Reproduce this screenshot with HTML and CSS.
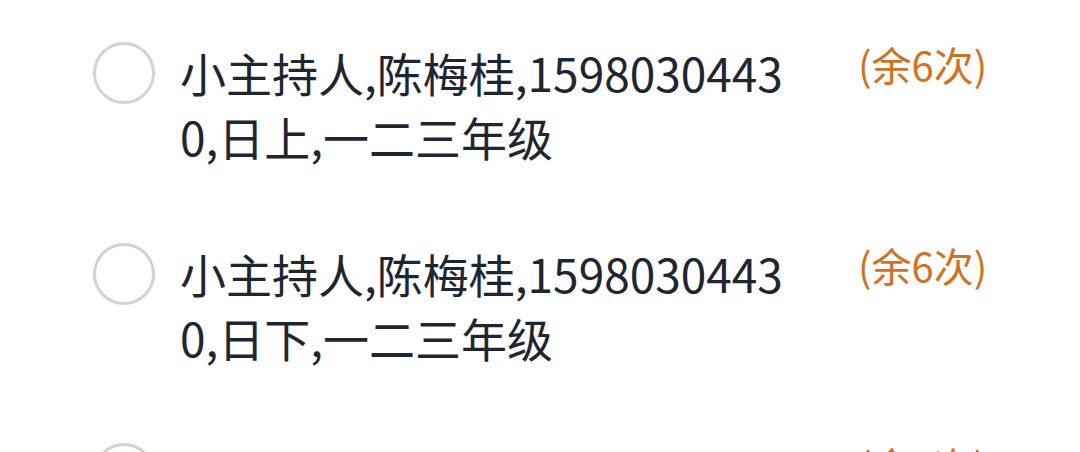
FILE: index.html
```html
<!DOCTYPE html>
<html lang="zh">
<head>
<meta charset="utf-8">
<link rel="stylesheet" href="styles.css">
</head>
<body>
<ul class="list">
  <li class="item">
    <span class="radio"></span>
    <div class="label">小主持人,陈梅桂,15980304430,日上,一二三年级</div>
    <div class="remain">(余6次)</div>
  </li>
  <li class="item">
    <span class="radio"></span>
    <div class="label">小主持人,陈梅桂,15980304430,日下,一二三年级</div>
    <div class="remain">(余6次)</div>
  </li>
  <li class="item">
    <span class="radio"></span>
    <div class="label">小主持人,陈梅桂,15980304430,日下,一二三年级</div>
    <div class="remain">(余6次)</div>
  </li>
</ul>
</body>
</html>
```
FILE: styles.css
```css
html, body {
  margin: 0;
  padding: 0;
  background: #ffffff;
  width: 1080px;
  height: 452px;
  overflow: hidden;
}
body {
  font-family: "Noto Sans CJK SC", "Noto Sans", sans-serif;
  color: #1f2630;
}
.list {
  list-style: none;
  margin: 0;
  padding: 42px 0 0 0;
}
.item {
  display: flex;
  align-items: flex-start;
  padding-left: 93px;
  height: 200.5px;
}
.radio {
  flex: none;
  width: 56px;
  height: 56px;
  border: 3px solid #d3d3d3;
  border-radius: 50%;
}
.label {
  flex: none;
  width: 608px;
  margin-left: 25px;
  margin-top: -2px;
  font-size: 46px;
  line-height: 64px;
  word-break: break-all;
}
.remain {
  margin-left: 70px;
  margin-top: -6px;
  font-size: 40px;
  line-height: 56px;
  color: #d0721f;
}
```
